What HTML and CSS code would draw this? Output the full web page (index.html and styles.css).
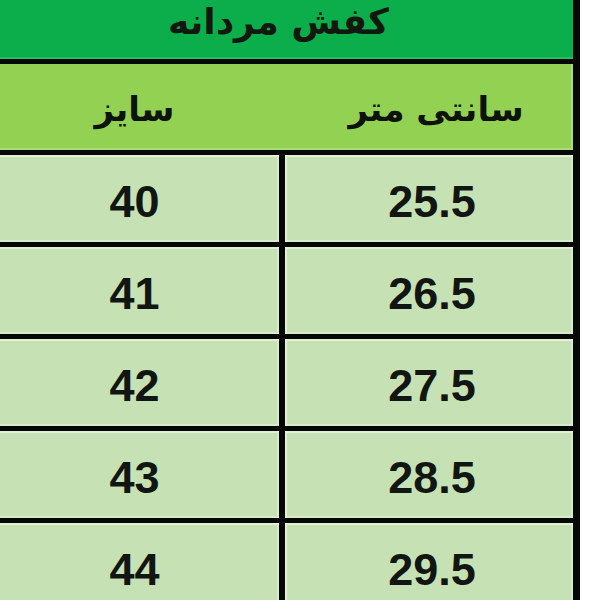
FILE: index.html
```html
<!DOCTYPE html>
<html lang="fa">
<head>
<meta charset="utf-8">
<link rel="stylesheet" href="styles.css">
</head>
<body>
<div class="sheet">
  <div class="title" dir="rtl">کفش مردانه</div>
  <div class="head">
    <span class="head-label" dir="rtl">سایز</span>
    <span class="head-label head-right" dir="rtl">سانتی متر</span>
  </div>
  <div class="cell">40</div><div class="cell cell-right">25.5</div>
  <div class="cell">41</div><div class="cell cell-right">26.5</div>
  <div class="cell">42</div><div class="cell cell-right">27.5</div>
  <div class="cell">43</div><div class="cell cell-right">28.5</div>
  <div class="cell">44</div><div class="cell cell-right">29.5</div>
</div>
</body>
</html>
```

FILE: styles.css
```css
html, body {
  margin: 0;
  padding: 0;
  background: #ffffff;
  overflow: hidden;
}
.sheet {
  width: 583px;
  margin-left: -10px;
  display: grid;
  grid-template-columns: 289px 288px;
  grid-template-rows: 59px 86px repeat(5, 87px);
  column-gap: 6px;
  row-gap: 5px;
  background: #050805;
  border-right: 7px solid #050805;
}
.title {
  grid-column: 1 / 3;
  background: #0cae4c;
  color: #101810;
  font-family: "DejaVu Sans", sans-serif;
  font-weight: bold;
  font-size: 36px;
  line-height: 44px;
  display: flex;
  align-items: flex-start;
  justify-content: center;
  padding-right: 6px;
  box-shadow: inset 0 -2px 0 #1fbf5c;
}
.head {
  grid-column: 1 / 3;
  background: #93d152;
  display: grid;
  grid-template-columns: 289px 6px 288px;
  grid-template-areas: "left gap right";
  box-shadow: inset 0 -2px 0 #a9db78, inset -2px 0 0 #a9db78;
}
.head-label {
  grid-area: left;
  color: #0d120b;
  font-family: "DejaVu Sans", sans-serif;
  font-weight: bold;
  font-size: 34px;
  display: flex;
  align-items: center;
  justify-content: center;
  padding-top: 4px;
}
.head-right {
  grid-area: right;
  padding-left: 14px;
}
.cell {
  background: #c6e2b5;
  color: #121612;
  font-family: "Liberation Sans", Arial, sans-serif;
  font-weight: bold;
  font-size: 45px;
  display: flex;
  align-items: center;
  justify-content: center;
  padding-top: 6px;
  box-shadow: inset 2px 2px 0 #e2f0d9, inset -2px -2px 0 #d6ead0;
}
.cell-right {
  padding-left: 6px;
}
```
